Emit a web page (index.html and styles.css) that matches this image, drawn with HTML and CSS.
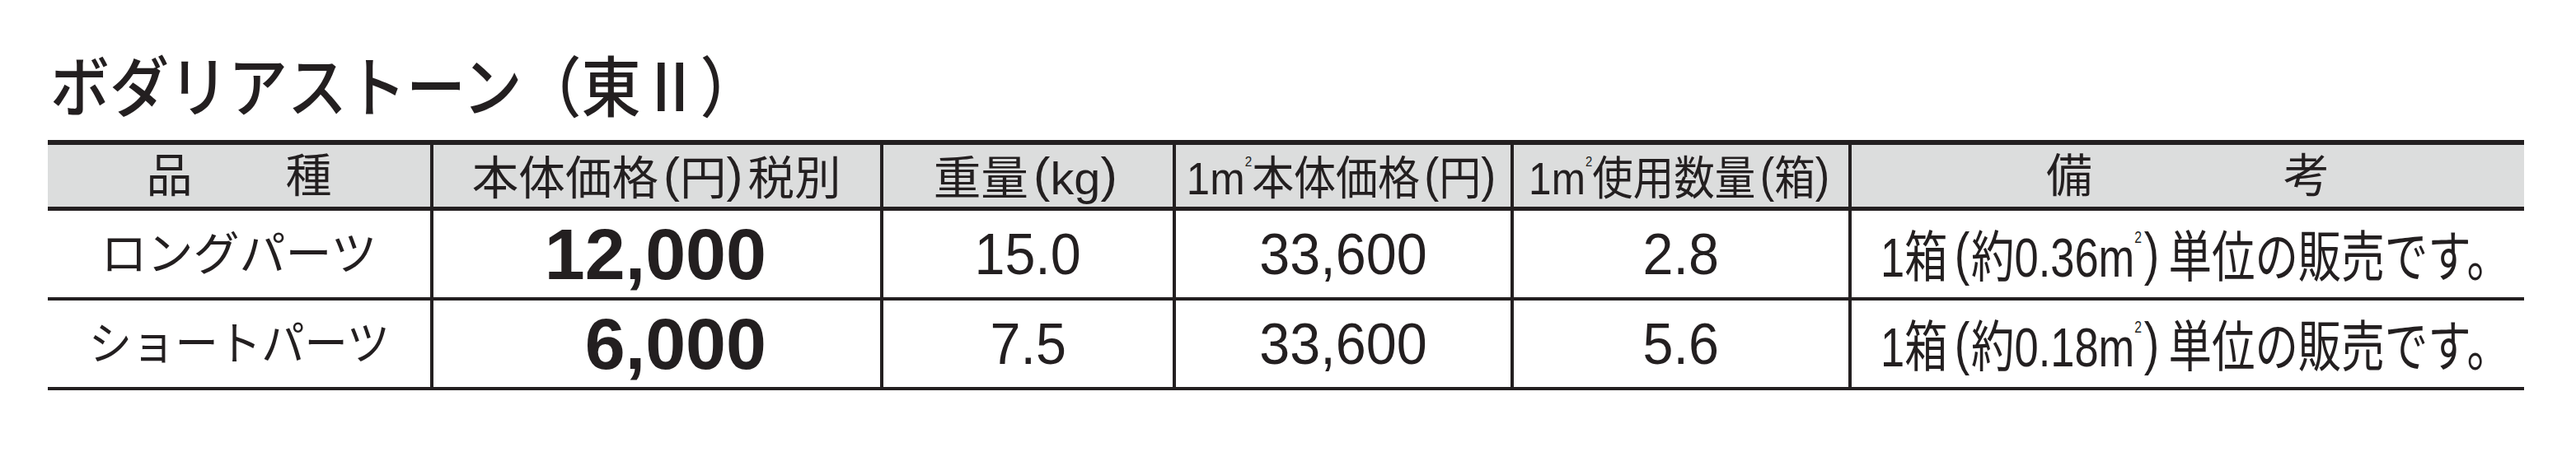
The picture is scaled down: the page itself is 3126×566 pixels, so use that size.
FILE: index.html
```html
<!DOCTYPE html>
<html lang="ja">
<head>
<meta charset="utf-8">
<title>ボダリアストーン（東Ⅱ）</title>
<link rel="stylesheet" href="styles.css">
</head>
<body>
<div class="page">
  <h1 class="title"><span class="title-text">ボダリアストーン（東Ⅱ）</span></h1>
  <div class="table">
    <div class="row head">
      <div class="cell"><span class="spread spread-1"><span>品</span><span>種</span></span></div>
      <div class="cell"><span class="sx h2">本体価格<span class="pl">(</span>円<span class="pr">)</span>税別</span></div>
      <div class="cell"><span class="sx h3">重量<span class="pl">(</span>kg<span class="pr">)</span></span></div>
      <div class="cell"><span class="sx h4">1m<span class="sq">2</span>本体価格<span class="pl">(</span>円<span class="pr">)</span></span></div>
      <div class="cell"><span class="sx h5">1m<span class="sq">2</span>使用数量<span class="pl">(</span>箱<span class="pr">)</span></span></div>
      <div class="cell"><span class="spread spread-6"><span>備</span><span>考</span></span></div>
    </div>
    <div class="row body">
      <div class="cell name"><span class="sx n1">ロングパーツ</span></div>
      <div class="cell price"><span class="big">12,000</span></div>
      <div class="cell num"><span class="sx nm">15.0</span></div>
      <div class="cell num"><span class="sx nm">33,600</span></div>
      <div class="cell num"><span class="sx nm">2.8</span></div>
      <div class="cell note"><span class="sx rk">1箱<span class="pl">(</span>約0.36m<span class="sq">2</span><span class="pr">)</span>単位の販売です。</span></div>
    </div>
    <div class="row body">
      <div class="cell name"><span class="sx n2">ショートパーツ</span></div>
      <div class="cell price"><span class="big">6,000</span></div>
      <div class="cell num"><span class="sx nm">7.5</span></div>
      <div class="cell num"><span class="sx nm">33,600</span></div>
      <div class="cell num"><span class="sx nm">5.6</span></div>
      <div class="cell note"><span class="sx rk">1箱<span class="pl">(</span>約0.18m<span class="sq">2</span><span class="pr">)</span>単位の販売です。</span></div>
    </div>
  </div>
</div>
</body>
</html>
```

FILE: styles.css
```css
html, body {
  margin: 0;
  padding: 0;
  background: #ffffff;
}

body {
  font-family: "Liberation Sans", "Noto Sans CJK JP", sans-serif;
  color: #231f20;
}

.page {
  padding-top: 60px;
}

.title {
  margin: 0 0 30px 61px;
  font-family: "Noto Sans CJK JP", sans-serif;
  font-size: 80px;
  line-height: 80px;
  height: 80px;
  font-weight: 500;
  white-space: nowrap;
}

.title-text {
  display: inline-block;
  transform: scaleX(0.9);
  transform-origin: left center;
}

.table {
  margin-left: 58px;
  width: 3005px;
}

.row {
  display: grid;
  grid-template-columns: 464px 546px 355px 410px 410px 820px;
  box-sizing: border-box;
}

.head {
  height: 86px;
  border-top: 6px solid #231f20;
  border-bottom: 5px solid #231f20;
  background: #dcdddd;
  font-size: 56px;
}

.body {
  height: 109px;
  border-bottom: 4px solid #231f20;
}

.cell {
  display: flex;
  align-items: center;
  justify-content: center;
  box-sizing: border-box;
  white-space: nowrap;
  line-height: 1;
}

.cell + .cell {
  border-left: 4px solid #231f20;
}

.sx {
  display: inline-block;
  transform-origin: center center;
}

.sq {
  font-size: 0.3em;
  vertical-align: 2em;
}

.pl,
.pr {
  font-size: 1.06em;
  vertical-align: 0.05em;
}

.pl {
  margin-left: 0.1em;
}

.pr {
  margin-right: 0.1em;
}

.spread {
  display: flex;
}

.spread-1 span + span {
  margin-left: 113px;
}

.spread-6 span + span {
  margin-left: 232px;
}

.h2 { transform: scaleX(1.01); }
.h3 { transform: scaleX(1.03); }
.h4 { transform: scaleX(0.91); }
.h5 { transform: scaleX(0.885); }

.name {
  font-size: 56px;
}

.n1 { transform: scaleX(1); }
.n2 { transform: scaleX(0.935); }

.price {
  justify-content: flex-end;
  padding-right: 138px;
}

.big {
  font-size: 88px;
  font-weight: 700;
}

.num {
  font-size: 70px;
}

.nm { transform: scaleX(0.95); }

.note {
  font-size: 67px;
  padding-left: 18px;
}

.note .pl {
  margin-left: 0.15em;
  margin-right: 0.03em;
}

.note .pr {
  margin-left: 0.05em;
  margin-right: 0.2em;
}

.rk { transform: scaleX(0.783); }
```
